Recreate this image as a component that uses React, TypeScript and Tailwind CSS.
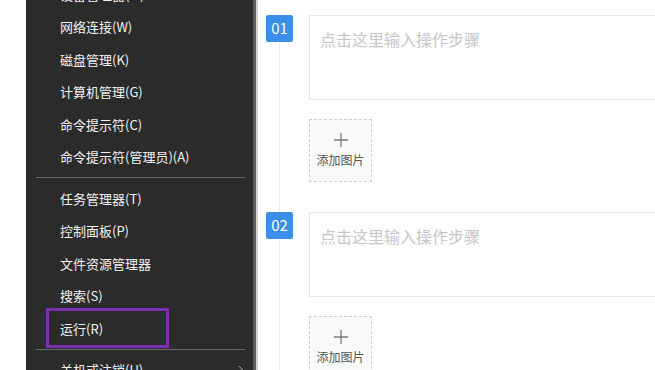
import { ChevronRight } from "lucide-react";

const font = { fontFamily: '"Noto Sans CJK SC", "Noto Sans", sans-serif' };

type Item = { label: string; sep?: boolean; boxed?: boolean; arrow?: boolean };

const items: Item[] = [
  { label: "设备管理器(M)" },
  { label: "网络连接(W)" },
  { label: "磁盘管理(K)" },
  { label: "计算机管理(G)" },
  { label: "命令提示符(C)" },
  { label: "命令提示符(管理员)(A)" },
  { label: "", sep: true },
  { label: "任务管理器(T)" },
  { label: "控制面板(P)" },
  { label: "文件资源管理器" },
  { label: "搜索(S)" },
  { label: "运行(R)", boxed: true },
  { label: "", sep: true },
  { label: "关机或注销(U)", arrow: true },
];

const Menu = () => (
  <div className="flex h-full w-[227px] flex-col bg-[#2b2b2b]">
    <div className="-mt-[22px] flex flex-col">
      {items.map((it, i) =>
        it.sep ? (
          <div key={i} className="flex h-[9px] items-center pl-[10px] pr-[8px]">
            <div className="h-px w-full bg-[#6a6a6a]" />
          </div>
        ) : (
          <div
            key={i}
            className="relative flex h-[32.5px] shrink-0 items-center justify-between pl-[34px] pr-[5px] text-[13px] text-[#f2f2f2]"
          >
            <span>{it.label}</span>
            {it.arrow && <ChevronRight className="h-[14px] w-[14px] text-[#cfcfcf]" strokeWidth={1.5} />}
            {it.boxed && (
              <div className="absolute left-[20px] top-[-4px] h-[40px] w-[123px] border-[3px] border-[#7d2fb3]" />
            )}
          </div>
        )
      )}
    </div>
  </div>
);

const Step = ({ num }: { num: string }) => (
  <div className="flex">
    <div className="flex w-[27px] shrink-0 flex-col items-center">
      <div className="flex h-[27px] w-[27px] items-center justify-center rounded-[2px] bg-[#3b8fe8] text-[15px] text-white">
        {num}
      </div>
      <div className="w-px flex-1 bg-[#ededed]" />
    </div>
    <div className="ml-[16px] flex flex-col pb-[30px]">
      <div className="h-[85px] w-[400px] border border-[#e6e6e6] bg-white px-[10px] pt-[11px] text-[16px] text-[#c6c6c6]">
        点击这里输入操作步骤
      </div>
      <div className="mt-[19px] flex h-[63px] w-[63px] flex-col items-center border border-dashed border-[#cfcfcf] bg-[#f9f9f9]">
        <svg width="14" height="14" viewBox="0 0 14 14" className="mt-[13px]">
          <path d="M7 0v14M0 7h14" stroke="#7a7a7a" strokeWidth="1.3" fill="none" />
        </svg>
        <span className="mt-[7px] text-[12px] leading-none text-[#555]">添加图片</span>
      </div>
    </div>
  </div>
);

const App = () => {
  return (
    <div className="flex h-[370px] w-[655px] overflow-hidden bg-white" style={font}>
      <div className="w-[26px] shrink-0 bg-white" />
      <Menu />
      <div className="w-[3px] shrink-0 bg-[#5e5e5e]" />
      <div className="w-[2px] shrink-0 bg-[#d4d4d4]" />
      <div className="flex flex-1 flex-col overflow-hidden pl-[8px] pt-[15px]">
        <Step num="01" />
        <Step num="02" />
      </div>
    </div>
  );
};

export default App;
